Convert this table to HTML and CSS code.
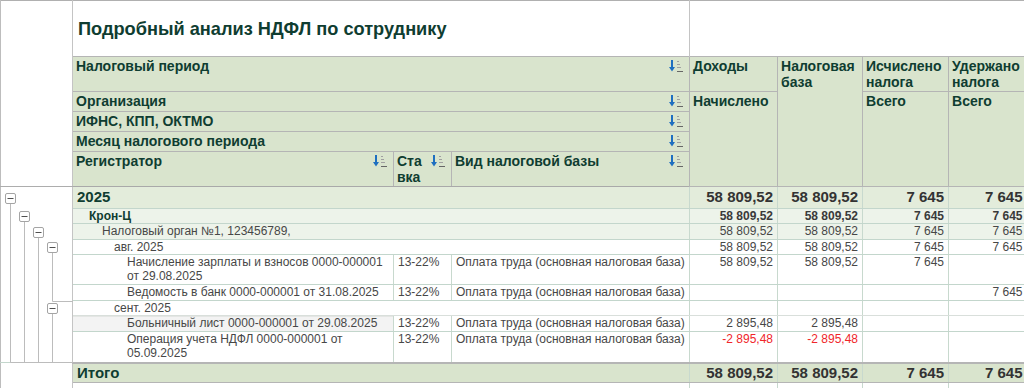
FILE: index.html
```html
<!DOCTYPE html>
<html lang="ru">
<head>
<meta charset="utf-8">
<title>Подробный анализ НДФЛ по сотруднику</title>
<link rel="stylesheet" href="styles.css">
</head>
<body>
<div class="wrap">
<table class="rep">
  <colgroup>
    <col class="c-gut"><col class="c-reg"><col class="c-st"><col class="c-vid">
    <col class="c-inc"><col class="c-base"><col class="c-calc"><col class="c-held">
  </colgroup>
  <tr class="r-title">
    <td class="gut-head" rowspan="6"></td>
    <td class="title" colspan="3">Подробный анализ НДФЛ по сотруднику</td>
    <td class="title-blank" colspan="4"></td>
  </tr>
  <tr class="hd r-h35">
    <td colspan="3"><div class="hc"><span>Налоговый период</span><svg class="si" viewBox="0 0 14 13" width="14" height="13"><path d="M3 0v8" stroke="#1e6fc0" stroke-width="2"/><path d="M0 7h6l-3 4.5z" fill="#1e6fc0"/><path d="M8 1.5h2M8 4.5h3M8 7.5h4" stroke="#a0a0a0"/><path d="M8 11.5h6" stroke="#666"/></svg></div></td>
    <td>Доходы</td>
    <td rowspan="5">Налоговая база</td>
    <td>Исчислено налога</td>
    <td>Удержано налога</td>
  </tr>
  <tr class="hd r-h20">
    <td colspan="3"><div class="hc"><span>Организация</span><svg class="si" viewBox="0 0 14 13" width="14" height="13"><path d="M3 0v8" stroke="#1e6fc0" stroke-width="2"/><path d="M0 7h6l-3 4.5z" fill="#1e6fc0"/><path d="M8 1.5h2M8 4.5h3M8 7.5h4" stroke="#a0a0a0"/><path d="M8 11.5h6" stroke="#666"/></svg></div></td>
    <td rowspan="4">Начислено</td>
    <td rowspan="4">Всего</td>
    <td rowspan="4">Всего</td>
  </tr>
  <tr class="hd r-h20">
    <td colspan="3"><div class="hc"><span>ИФНС, КПП, ОКТМО</span><svg class="si" viewBox="0 0 14 13" width="14" height="13"><path d="M3 0v8" stroke="#1e6fc0" stroke-width="2"/><path d="M0 7h6l-3 4.5z" fill="#1e6fc0"/><path d="M8 1.5h2M8 4.5h3M8 7.5h4" stroke="#a0a0a0"/><path d="M8 11.5h6" stroke="#666"/></svg></div></td>
  </tr>
  <tr class="hd r-h20">
    <td colspan="3"><div class="hc"><span>Месяц налогового периода</span><svg class="si" viewBox="0 0 14 13" width="14" height="13"><path d="M3 0v8" stroke="#1e6fc0" stroke-width="2"/><path d="M0 7h6l-3 4.5z" fill="#1e6fc0"/><path d="M8 1.5h2M8 4.5h3M8 7.5h4" stroke="#a0a0a0"/><path d="M8 11.5h6" stroke="#666"/></svg></div></td>
  </tr>
  <tr class="hd r-h35 last-h">
    <td><div class="hc"><span>Регистратор</span><svg class="si" viewBox="0 0 14 13" width="14" height="13"><path d="M3 0v8" stroke="#1e6fc0" stroke-width="2"/><path d="M0 7h6l-3 4.5z" fill="#1e6fc0"/><path d="M8 1.5h2M8 4.5h3M8 7.5h4" stroke="#a0a0a0"/><path d="M8 11.5h6" stroke="#666"/></svg></div></td>
    <td><div class="hc"><span class="narrow">Ста<wbr>вка</span><svg class="si" viewBox="0 0 14 13" width="14" height="13"><path d="M3 0v8" stroke="#1e6fc0" stroke-width="2"/><path d="M0 7h6l-3 4.5z" fill="#1e6fc0"/><path d="M8 1.5h2M8 4.5h3M8 7.5h4" stroke="#a0a0a0"/><path d="M8 11.5h6" stroke="#666"/></svg></div></td>
    <td><div class="hc"><span>Вид налоговой базы</span><svg class="si" viewBox="0 0 14 13" width="14" height="13"><path d="M3 0v8" stroke="#1e6fc0" stroke-width="2"/><path d="M0 7h6l-3 4.5z" fill="#1e6fc0"/><path d="M8 1.5h2M8 4.5h3M8 7.5h4" stroke="#a0a0a0"/><path d="M8 11.5h6" stroke="#666"/></svg></div></td>
  </tr>

  <tr class="g0 r-22">
    <td class="gut-tree" rowspan="9">
      <svg class="tree" width="72" height="160" viewBox="0 0 72 160">
        <g stroke="#bcbcbc" fill="none">
          <path d="M9.5 16v159.5H72"/>
          <path d="M23.5 34v141"/>
          <path d="M37.5 50v125"/>
          <path d="M51.5 65v49.5H72"/>
          <path d="M51.5 126v49"/>
        </g>
        <g fill="#fff" stroke="#a4a4a4">
          <rect x="4.5" y="6.5" width="10" height="10" rx="1.5"/>
          <rect x="18.5" y="24.5" width="10" height="10" rx="1.5"/>
          <rect x="32.5" y="40.5" width="10" height="10" rx="1.5"/>
          <rect x="46.5" y="55.5" width="10" height="10" rx="1.5"/>
          <rect x="46.5" y="116.5" width="10" height="10" rx="1.5"/>
        </g>
        <g stroke="#505050">
          <path d="M6.5 11.5h6M20.5 29.5h6M34.5 45.5h6M48.5 60.5h6M48.5 121.5h6"/>
        </g>
      </svg>
    </td>
    <td colspan="3" class="lbl l0">2025</td>
    <td class="n">58 809,52</td><td class="n">58 809,52</td><td class="n">7 645</td><td class="n">7 645</td>
  </tr>
  <tr class="g1 r-15">
    <td colspan="3" class="lbl l1">Крон-Ц</td>
    <td class="n">58 809,52</td><td class="n">58 809,52</td><td class="n">7 645</td><td class="n">7 645</td>
  </tr>
  <tr class="g2 r-16">
    <td colspan="3" class="lbl l2">Налоговый орган №1, 123456789,</td>
    <td class="n">58 809,52</td><td class="n">58 809,52</td><td class="n">7 645</td><td class="n">7 645</td>
  </tr>
  <tr class="g3 r-15">
    <td colspan="3" class="lbl l3">авг. 2025</td>
    <td class="n">58 809,52</td><td class="n">58 809,52</td><td class="n">7 645</td><td class="n">7 645</td>
  </tr>
  <tr class="det r-30">
    <td class="lbl l4">Начисление зарплаты и взносов 0000-000001 от 29.08.2025</td>
    <td>13-22%</td>
    <td>Оплата труда (основная налоговая база)</td>
    <td class="n">58 809,52</td><td class="n">58 809,52</td><td class="n">7 645</td><td class="n"></td>
  </tr>
  <tr class="det r-16">
    <td class="lbl l4">Ведомость в банк 0000-000001 от 31.08.2025</td>
    <td>13-22%</td>
    <td>Оплата труда (основная налоговая база)</td>
    <td class="n"></td><td class="n"></td><td class="n"></td><td class="n">7 645</td>
  </tr>
  <tr class="g3 r-15 before-sel">
    <td colspan="3" class="lbl l3">сент. 2025</td>
    <td class="n"></td><td class="n"></td><td class="n"></td><td class="n"></td>
  </tr>
  <tr class="det r-16">
    <td class="lbl l4 sel">Больничный лист 0000-000001 от 29.08.2025</td>
    <td>13-22%</td>
    <td>Оплата труда (основная налоговая база)</td>
    <td class="n">2 895,48</td><td class="n">2 895,48</td><td class="n"></td><td class="n"></td>
  </tr>
  <tr class="det r-31">
    <td class="lbl l4">Операция учета НДФЛ 0000-000001 от 05.09.2025</td>
    <td>13-22%</td>
    <td>Оплата труда (основная налоговая база)</td>
    <td class="n neg">-2 895,48</td><td class="n neg">-2 895,48</td><td class="n"></td><td class="n"></td>
  </tr>
  <tr class="tot r-20">
    <td class="gut-empty"></td>
    <td colspan="3" class="lbl l0">Итого</td>
    <td class="n">58 809,52</td><td class="n">58 809,52</td><td class="n">7 645</td><td class="n">7 645</td>
  </tr>
  <tr class="after r-10">
    <td class="gut-empty"></td>
    <td colspan="3"></td>
    <td></td><td></td><td></td><td></td>
  </tr>
</table>
</div>
</body>
</html>
```

FILE: styles.css
```css
body {
  margin: 0;
  background: #fff;
  font-family: "Liberation Sans", Arial, sans-serif;
}

.wrap {
  width: 1024px;
  height: 388px;
  overflow: hidden;
}

.rep {
  border-collapse: collapse;
  table-layout: fixed;
  width: 1026px;
  border-top: 1px solid #b0b0b0;
}

.c-gut { width: 72px; }
.c-reg { width: 321px; }
.c-st { width: 58px; }
.c-vid { width: 238px; }
.c-inc { width: 88px; }
.c-base { width: 85px; }
.c-calc { width: 86px; }
.c-held { width: 78px; }

.rep td {
  padding: 0 4px;
  vertical-align: top;
  font-size: 12px;
  line-height: 14px;
  color: #474747;
  overflow: hidden;
}

/* gutter */
.gut-head {
  border-left: 1px solid #bdbdbd;
  border-right: 1px solid #c4c4c4;
  border-bottom: 1px solid #adadad;
  background: #fff;
}

.rep td.gut-tree,
.rep td.gut-empty {
  padding: 0;
  border-left: 1px solid #bdbdbd;
  border-right: 1px solid #c4c4c4;
  background: #fff;
}

.rep td.gut-tree { overflow: visible; }

.tree {
  display: block;
  overflow: visible;
}

/* title */
.r-title { height: 56px; }

.rep td.title {
  vertical-align: middle;
  padding-left: 5px;
  font-size: 18.2px;
  line-height: 22px;
  font-weight: bold;
  color: #0f3d31;
  white-space: nowrap;
}

.title-blank {
  border-left: 1px solid #c4c4c4;
}

/* header */
.hd td {
  background: #d9e4cd;
  border: 1px solid #b5b5b5;
}

.rep .hd td {
  padding: 1px 3px 0 3px;
  font-size: 14px;
  line-height: 16px;
  font-weight: bold;
  color: #0f3d31;
}

.hc {
  display: flex;
  justify-content: space-between;
  align-items: flex-start;
}

.si {
  flex: none;
  margin: 2px 3px 0 4px;
}

.narrow {
  width: 30px;
}

.r-h35 { height: 35px; }
.r-h20 { height: 20px; }

.last-h td { border-bottom: 1px solid #a9a9a9; }

/* body rows */
.r-22 { height: 22px; }
.r-15 { height: 15px; }
.r-16 { height: 16px; }
.r-20 { height: 20px; }
.r-30 { height: 30px; }
.r-31 { height: 31px; }
.r-10 { height: 10px; }

.g0 td, .g1 td, .g2 td, .g3 td, .det td, .tot td, .after td {
  border-bottom: 1px solid #c3d6cc;
  border-left: 1px solid #c8d9ce;
}

.n { text-align: right; }

.l0 { padding-left: 4px; }
.rep td.l1 { padding-left: 16px; }
.rep td.l2 { padding-left: 29px; }
.rep td.l3 { padding-left: 41px; }
.rep td.l4 { padding-left: 54px; }

.g0 td {
  background: #e3ecdb;
  font-size: 15px;
  line-height: 20px;
  font-weight: bold;
  color: #333;
}

.g0 td.lbl { color: #0f3d31; }

.g1 td {
  background: #edf3ea;
  font-weight: bold;
  color: #3a3a3a;
}

.g1 td.lbl { color: #0f3d31; }

.g2 td { background: #edf3ea; }

.g3 td { background: #fff; }

.det td { background: #fff; }

.before-sel td { border-bottom-color: #d9dfdb; }

.rep td.sel {
  background: #f3f3f3;
  box-shadow: inset 0 1px 0 #e4e6e4;
}

.neg { color: #f0262a !important; }

.tot td {
  background: #d9e4cd;
  border-top: 2px solid #b5b5b5;
  border-bottom: 1px solid #b5b5b5;
  font-size: 15px;
  line-height: 18px;
  font-weight: bold;
  color: #333;
}

.tot td.lbl { color: #0f3d31; }

.rep .tot td.gut-empty {
  background: #fff;
  border-top: 1px solid #bcbcbc;
  border-bottom: none;
}

.after td { background: #fff; border-bottom: none; }
```
